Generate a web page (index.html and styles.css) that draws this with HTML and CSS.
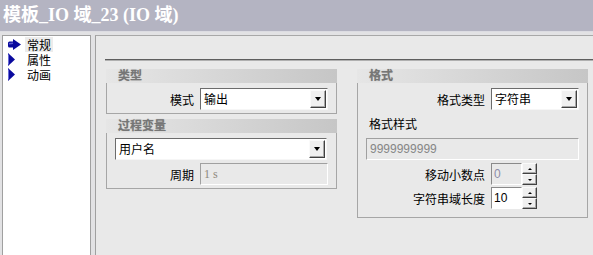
FILE: index.html
```html
<!DOCTYPE html>
<html lang="zh-CN">
<head>
    <meta charset="UTF-8">
    <title>模板_IO 域_23 (IO 域)</title>
    <link rel="stylesheet" href="styles.css">
</head>
<body>
    <div class="titlebar">模板_IO 域_23 (IO 域)</div>
    <div class="workspace">
        <ul class="nav">
            <li class="nav-item selected">
                <span class="nav-icon">
                    <svg width="13" height="11" viewBox="0 0 13 11">
                        <path d="M0 4 Q0 2.5 1.5 2.5 L5 2.5 L5 0 L13 5.5 L5 11 L5 8.5 L1.5 8.5 Q0 8.5 0 7 Z" fill="#0a0a9e"/>
                        <path d="M1 4 L5 3.5 L5 5 L1 5.5 Z" fill="#5a5ad0"/>
                    </svg>
                </span>
                <span class="nav-text">常规</span>
            </li>
            <li class="nav-item">
                <span class="nav-icon">
                    <svg width="7" height="13" viewBox="0 0 7 13">
                        <path d="M0 0 L7 6.5 L0 13 Z" fill="#0a0a9e"/>
                        <path d="M0 1 L1 1.9 L1 11.1 L0 12 Z" fill="#6a6ad8"/>
                    </svg>
                </span>
                <span class="nav-text">属性</span>
            </li>
            <li class="nav-item">
                <span class="nav-icon">
                    <svg width="7" height="13" viewBox="0 0 7 13">
                        <path d="M0 0 L7 6.5 L0 13 Z" fill="#0a0a9e"/>
                        <path d="M0 1 L1 1.9 L1 11.1 L0 12 Z" fill="#6a6ad8"/>
                    </svg>
                </span>
                <span class="nav-text">动画</span>
            </li>
        </ul>
        <div class="main">
            <div class="rule"></div>
            <div class="groups">
                <div class="column">
                    <div class="group">
                        <div class="group-title">类型</div>
                        <div class="group-body">
                            <div class="row">
                                <span class="label label-left">模式</span>
                                <div class="combo combo-left">
                                    <span class="combo-value">输出</span>
                                    <span class="combo-button"><i class="arrow-down"></i></span>
                                </div>
                            </div>
                        </div>
                    </div>
                    <div class="group">
                        <div class="group-title">过程变量</div>
                        <div class="group-body">
                            <div class="combo combo-wide">
                                <span class="combo-value">用户名</span>
                                <span class="combo-button"><i class="arrow-down"></i></span>
                            </div>
                            <div class="row">
                                <span class="label label-left">周期</span>
                                <div class="field disabled field-left serif">1 s</div>
                            </div>
                        </div>
                    </div>
                </div>
                <div class="column">
                    <div class="group">
                        <div class="group-title">格式</div>
                        <div class="group-body format-body">
                            <div class="row">
                                <span class="label label-right">格式类型</span>
                                <div class="combo combo-right">
                                    <span class="combo-value">字符串</span>
                                    <span class="combo-button"><i class="arrow-down"></i></span>
                                </div>
                            </div>
                            <div class="caption">格式样式</div>
                            <div class="field disabled field-wide">9999999999</div>
                            <div class="row">
                                <span class="label label-right">移动小数点</span>
                                <div class="spin">
                                    <div class="spin-value disabled">0</div>
                                    <div class="spin-buttons">
                                        <span class="spin-button"><i class="arrow-up"></i></span>
                                        <span class="spin-button"><i class="arrow-small-down"></i></span>
                                    </div>
                                </div>
                            </div>
                            <div class="row row-tight">
                                <span class="label label-right">字符串域长度</span>
                                <div class="spin">
                                    <div class="spin-value">10</div>
                                    <div class="spin-buttons">
                                        <span class="spin-button"><i class="arrow-up"></i></span>
                                        <span class="spin-button"><i class="arrow-small-down"></i></span>
                                    </div>
                                </div>
                            </div>
                        </div>
                    </div>
                </div>
            </div>
        </div>
    </div>
</body>
</html>
```

FILE: styles.css
```css
body {
    margin: 0;
    background-color: #e2e2e4;
    font-family: "Noto Sans CJK SC", sans-serif;
    font-size: 12px;
    color: #000;
    overflow: hidden;
}

.titlebar {
    height: 31px;
    line-height: 31px;
    padding-left: 3px;
    background-color: #b4b4c2;
    border-bottom: 1px solid #dcdce2;
    color: #fff;
    font-family: "Liberation Serif", "Noto Sans CJK SC", serif;
    font-size: 18px;
    font-weight: bold;
    white-space: nowrap;
}

.workspace {
    display: flex;
    padding-top: 3px;
    height: 230px;
}

/* left navigation list */
.nav {
    list-style: none;
    margin: 0 0 0 2px;
    padding: 1px 0 0 0;
    width: 87px;
    background-color: #fff;
    border: 1px solid #a0a0a0;
    border-bottom: none;
}

.nav-item {
    display: flex;
    align-items: center;
    height: 15px;
    padding-left: 5px;
}

.nav-icon {
    display: flex;
    align-items: center;
    width: 13px;
    height: 15px;
}

.nav-text {
    margin-left: 4px;
    padding: 0 2px;
    height: 15px;
    line-height: 15px;
}

.selected .nav-text {
    background-color: #ececec;
}

/* right content area */
.main {
    flex: 1;
    margin-left: 4px;
    padding-top: 23px;
    background-color: #e9e9e9;
    border-left: 1px solid #a0a0a0;
    border-top: 1px solid #a8a8a8;
}

.rule {
    margin-left: 9px;
    border-top: 1px solid #5e5e5e;
    border-bottom: 1px solid #b0b0b0;
}

.groups {
    display: flex;
    gap: 20px;
    margin-top: 8px;
    padding-left: 10px;
}

.column {
    display: flex;
    flex-direction: column;
    gap: 5px;
    width: 231px;
}

.group {
    display: flex;
    flex-direction: column;
}

.group-title {
    height: 14px;
    line-height: 14px;
    padding-left: 12px;
    background: linear-gradient(to right, #e6e6e6, #c6c6c6);
    color: #767676;
    font-weight: bold;
    font-family: "Liberation Serif", "Noto Sans CJK SC", serif;
    text-shadow: 0 0 1px #a0a0a0;
}

.group-body {
    display: flex;
    flex-direction: column;
    gap: 3px;
    padding: 5px 0 3px 0;
    border: 1px solid #a6a6a6;
    border-top: none;
}

.format-body {
    gap: 0;
    padding-bottom: 8px;
}

.row {
    display: flex;
    align-items: center;
    gap: 6px;
}

.format-body .row {
    margin-top: 3px;
}

.format-body .row:first-child {
    margin-top: 0;
}

.format-body .row-tight {
    margin-top: 2px;
}

.label {
    text-align: right;
    white-space: nowrap;
}

.label-left {
    width: 87px;
}

.label-right {
    width: 127px;
}

/* combo boxes */
.combo {
    display: flex;
    box-sizing: border-box;
    height: 22px;
    padding: 1px;
    background-color: #fff;
    border: 1px solid;
    border-color: #6c6c6c #f6f6f6 #f6f6f6 #6c6c6c;
}

.combo-left {
    width: 128px;
}

.combo-right {
    width: 88px;
}

.combo-wide {
    width: 212px;
    margin-left: 8px;
}

.combo-value {
    flex: 1;
    padding-left: 2px;
    line-height: 18px;
}

.combo-button {
    display: flex;
    align-items: center;
    justify-content: center;
    box-sizing: border-box;
    width: 16px;
    background-color: #f0f0f0;
    border: 1px solid;
    border-color: #fafafa #404040 #404040 #fafafa;
    box-shadow: inset -1px -1px 0 #a8a8a8;
}

.arrow-down {
    width: 0;
    height: 0;
    border-left: 3px solid transparent;
    border-right: 3px solid transparent;
    border-top: 4px solid #000;
}

/* text fields */
.field {
    box-sizing: border-box;
    height: 22px;
    line-height: 20px;
    padding-left: 3px;
    border: 1px solid;
    border-color: #a0a0a0 #fff #fff #a0a0a0;
}

.field-left {
    width: 128px;
}

.field-wide {
    width: 213px;
    margin-left: 8px;
    font-family: "Liberation Sans", sans-serif;
}

.disabled {
    background-color: #e9e9e9;
    color: #868686;
}

.serif {
    font-family: "Liberation Serif", serif;
    color: #8e887c;
}

.caption {
    height: 28px;
    line-height: 28px;
    padding-left: 11px;
}

/* spin boxes */
.spin {
    display: flex;
    width: 46px;
    height: 22px;
}

.spin-value {
    flex: 1;
    box-sizing: border-box;
    padding-left: 2px;
    line-height: 20px;
    background-color: #fff;
    font-family: "Liberation Sans", sans-serif;
    border: 1px solid;
    border-color: #8a8a8a #fff #fff #8a8a8a;
}

.spin-value.disabled {
    background-color: #e9e9e9;
    color: #8c8ca6;
}

.spin-buttons {
    display: flex;
    flex-direction: column;
    width: 15px;
}

.spin-button {
    flex: 1;
    display: flex;
    align-items: center;
    justify-content: center;
    box-sizing: border-box;
    background-color: #efefef;
    border: 1px solid;
    border-color: #fafafa #404040 #404040 #fafafa;
    box-shadow: inset -1px -1px 0 #a8a8a8;
}

.arrow-up {
    width: 0;
    height: 0;
    border-left: 2px solid transparent;
    border-right: 2px solid transparent;
    border-bottom: 2px solid #000;
}

.arrow-small-down {
    width: 0;
    height: 0;
    border-left: 2px solid transparent;
    border-right: 2px solid transparent;
    border-top: 2px solid #000;
}
```
